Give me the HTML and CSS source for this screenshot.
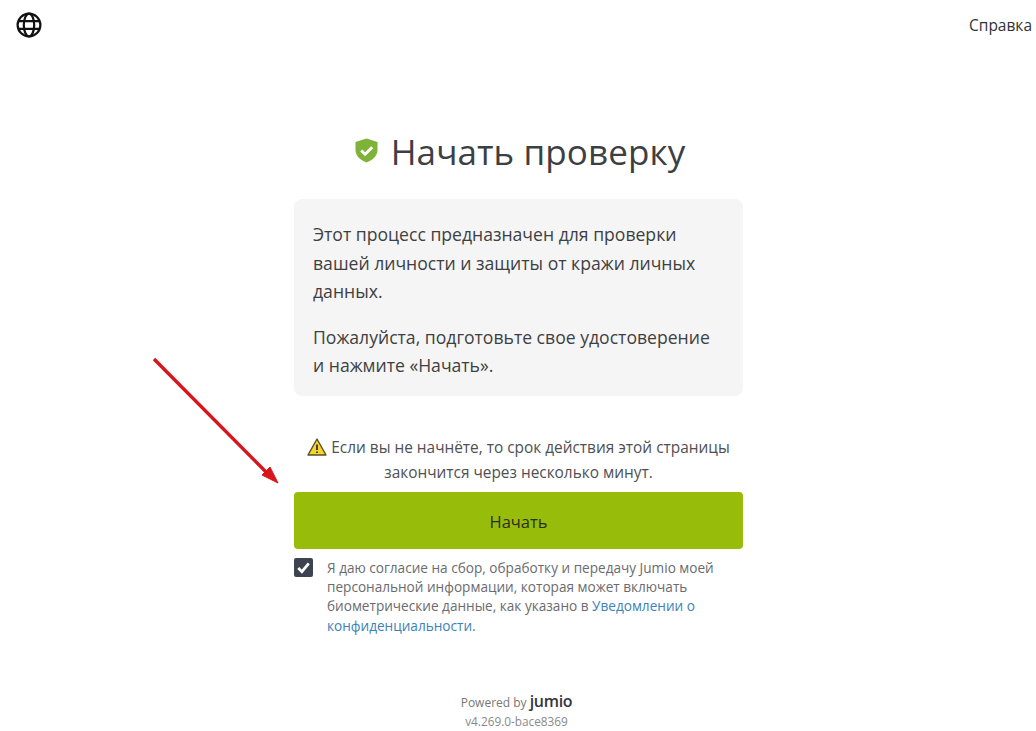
FILE: index.html
```html
<!DOCTYPE html>
<html lang="ru">
<head>
  <meta charset="UTF-8">
  <meta name="viewport" content="width=device-width, initial-scale=1.0">
  <title>Начать проверку</title>
  <link rel="stylesheet" href="styles.css">
</head>
<body>
  <header class="topbar">
    <svg class="globe" viewBox="0 0 26 26" fill="none" stroke="#111" stroke-width="2.2">
      <circle cx="13" cy="13" r="11.4"/>
      <ellipse cx="13" cy="13" rx="5.2" ry="11.4"/>
      <path d="M2.5 9.2h21M2.5 16.8h21"/>
    </svg>
    <a class="help" href="#">Справка</a>
  </header>

  <main class="container">
    <h1 class="title">
      <svg class="shield" viewBox="0 0 24 26">
        <path d="M12 0.5 L23.5 4 V12 C23.5 19 18 23.5 12 25.5 C6 23.5 0.5 19 0.5 12 V4 Z" fill="#7fb239"/>
        <path d="M6.5 13 L10.5 17 L18 9.5" fill="none" stroke="#fff" stroke-width="3"/>
      </svg>
      Начать проверку
    </h1>

    <!-- Intro card -->
    <div class="card">
      <p>Этот процесс предназначен для проверки вашей личности и защиты от кражи личных данных.</p>
      <p>Пожалуйста, подготовьте свое удостоверение и нажмите «Начать».</p>
    </div>

    <p class="warning">
      <svg class="warn-icon" viewBox="0 0 20 18">
        <path d="M10 1 L19 17 H1 Z" fill="#f6d32d" stroke="#55502a" stroke-width="1.4" stroke-linejoin="round"/>
        <path d="M10 6.5 V12 M10 13.4 V15" stroke="#333" stroke-width="1.8"/>
      </svg>
      Если вы не начнёте, то срок действия этой страницы закончится через несколько минут.
    </p>

    <button class="start">Начать</button>

    <label class="consent">
      <span class="checkbox">
        <svg viewBox="0 0 18 18" fill="none" stroke="#fff" stroke-width="2.6"><path d="M4 9.5 L7.5 13 L14 5"/></svg>
      </span>
      <span>Я даю согласие на сбор, обработку и передачу Jumio моей персональной информации, которая может включать биометрические данные, как указано в <a href="#">Уведомлении о конфиденциальности.</a></span>
    </label>
  </main>

  <footer class="footer">
    <div class="powered">Powered by <span class="brand">jumio</span></div>
    <div class="version">v4.269.0-bace8369</div>
  </footer>

  <!-- Red annotation arrow drawn over the page -->
  <svg class="arrow" viewBox="0 0 140 140" fill="none">
    <path d="M2 2 L115 116" stroke="#d8141c" stroke-width="3.4"/>
    <path d="M126 126 L110 118 L118 110 Z" fill="#d8141c" stroke="#d8141c"/>
  </svg>
</body>
</html>
```

FILE: styles.css
```css
body {
  margin: 0;
  background-color: #ffffff;
  color: #3e3f42;
  font-family: 'Open Sans', 'Noto Sans', sans-serif;
  position: relative;
  height: 731px;
  overflow: hidden;
}

.topbar {
  display: flex;
  justify-content: space-between;
  align-items: flex-start;
  padding: 12px 4px 0 16px;
  height: 64px;
}

.globe {
  width: 26px;
  height: 26px;
}

.help {
  color: #333;
  font-size: 15.5px;
  line-height: 26px;
  text-decoration: none;
}

.container {
  width: 449px;
  margin: 0 auto;
  padding-left: 1px;
}

.title {
  display: flex;
  justify-content: center;
  align-items: flex-start;
  gap: 13px;
  margin: 0;
  padding: 48px 0 0 3px;
  height: 75px;
  font-size: 35px;
  line-height: 56px;
  font-weight: 400;
  letter-spacing: 0.1px;
  color: #3c4043;
}

.shield {
  width: 23px;
  height: 25px;
  margin-top: 14px;
}

.card {
  background-color: #f5f5f5;
  border-radius: 8px;
  padding: 21px 23px 0 19px;
  font-size: 17.6px;
  line-height: 28.5px;
  height: 176px;
}

.card p {
  margin: 0 0 17px;
}

.warning {
  margin: 39px 0 0;
  padding: 0 8px;
  text-align: center;
  font-size: 15.4px;
  line-height: 25px;
  color: #4f5053;
}

.warn-icon {
  width: 20px;
  height: 18px;
  vertical-align: -3px;
}

.start {
  display: block;
  width: 100%;
  height: 57px;
  margin-top: 7px;
  padding-top: 3px;
  border: none;
  border-radius: 4px;
  background-color: #97bd0a;
  color: #2c2f1c;
  font-family: inherit;
  font-size: 16.5px;
  cursor: pointer;
}

.consent {
  display: flex;
  gap: 14px;
  margin-top: 9px;
  font-size: 13.6px;
  line-height: 19.2px;
  color: #6a6b6e;
}

.checkbox {
  flex: none;
  width: 19px;
  height: 19px;
  background-color: #3e4352;
  border-radius: 2px;
}

.checkbox svg {
  display: block;
}

.consent a {
  color: #3b82b8;
  text-decoration: none;
}

.footer {
  margin-top: 56px;
  padding-right: 3px;
  text-align: center;
  color: #777;
}

.powered {
  font-size: 12px;
  line-height: 20px;
}

.brand {
  color: #33363a;
  font-size: 16px;
  font-weight: 600;
  letter-spacing: -0.3px;
}

.version {
  font-size: 11.8px;
  line-height: 16px;
  color: #8a8a8a;
}

.arrow {
  position: absolute;
  left: 152px;
  top: 357px;
  width: 140px;
  height: 140px;
}
```
